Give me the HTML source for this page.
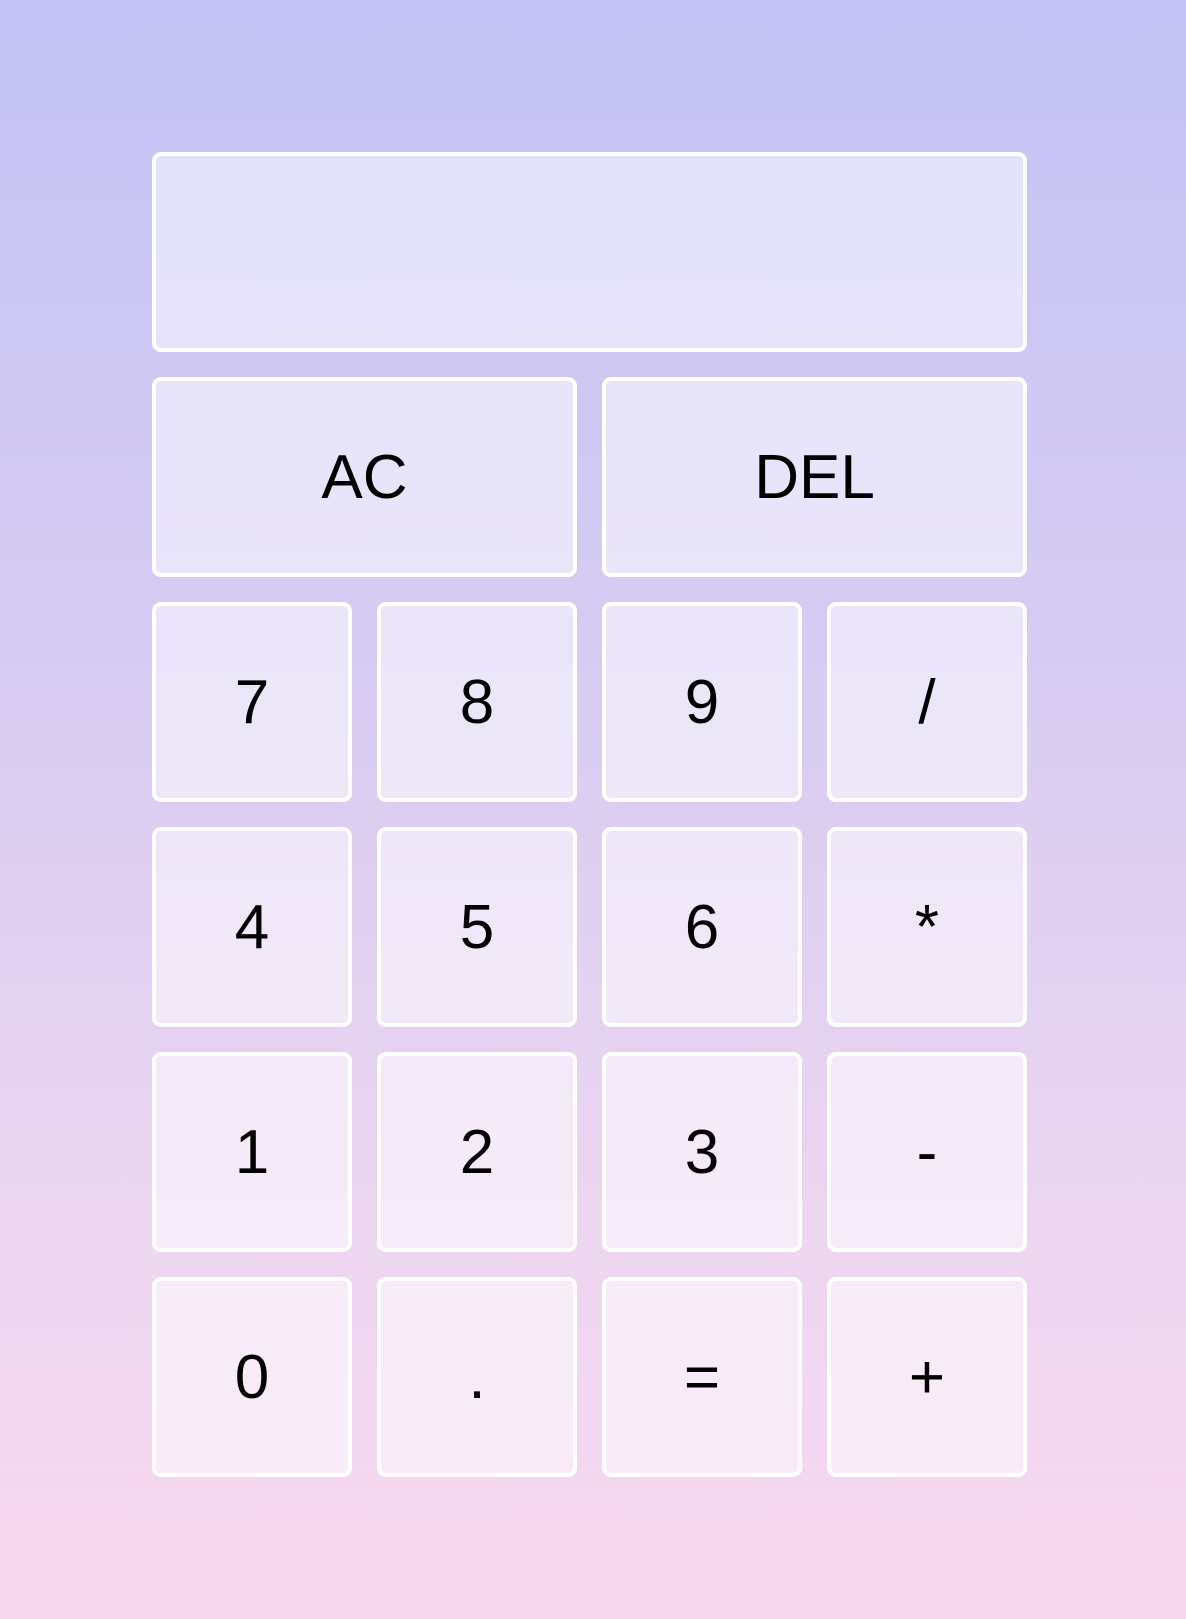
<!DOCTYPE html>
<html><head><style>
html,body{margin:0;padding:0}
body{width:1186px;height:1619px;background:linear-gradient(to bottom,#c3c3f5 0%,#d6cbf2 40%,#ecd6f0 75%,#f8d8ef 100%);font-family:"Liberation Sans",sans-serif;position:relative;overflow:hidden}
.g{position:absolute;left:152px;top:152px;display:grid;grid-template-columns:repeat(4,200px);grid-template-rows:repeat(6,200px);gap:25px}
.b{box-sizing:border-box;border:4px solid #fff;border-radius:9px;background:rgba(255,255,255,.5);display:flex;align-items:center;justify-content:center;font-size:62px;color:#000}
.d{grid-column:span 4}
.w{grid-column:span 2}
</style></head><body>
<div class="g">
<div class="b d"></div>
<div class="b w">AC</div><div class="b w">DEL</div>
<div class="b">7</div><div class="b">8</div><div class="b">9</div><div class="b">/</div>
<div class="b">4</div><div class="b">5</div><div class="b">6</div><div class="b">*</div>
<div class="b">1</div><div class="b">2</div><div class="b">3</div><div class="b">-</div>
<div class="b">0</div><div class="b">.</div><div class="b">=</div><div class="b">+</div>
</div>
</body></html>
